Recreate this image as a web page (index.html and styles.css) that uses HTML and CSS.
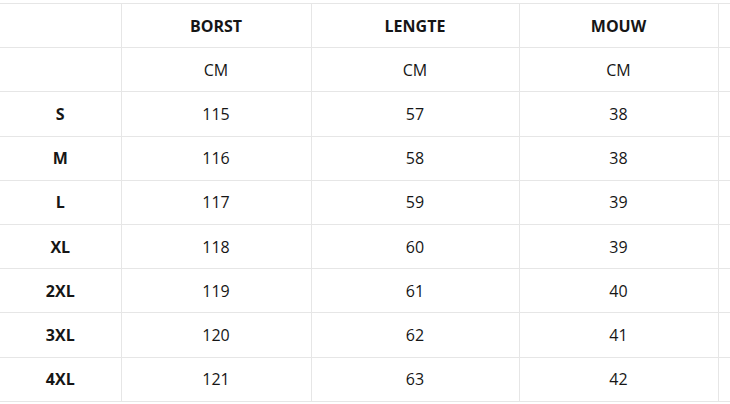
FILE: index.html
```html
<!DOCTYPE html>
<html>
<head>
<meta charset="utf-8">
<link rel="stylesheet" href="styles.css">
</head>
<body>
<table class="size-table">
  <colgroup>
    <col class="c-size">
    <col class="c-borst">
    <col class="c-lengte">
    <col class="c-mouw">
    <col class="c-extra">
  </colgroup>
  <tr class="head">
    <td></td><td>BORST</td><td>LENGTE</td><td>MOUW</td><td></td>
  </tr>
  <tr><td></td><td>CM</td><td>CM</td><td>CM</td><td></td></tr>
  <tr><td class="size">S</td><td>115</td><td>57</td><td>38</td><td></td></tr>
  <tr><td class="size">M</td><td>116</td><td>58</td><td>38</td><td></td></tr>
  <tr><td class="size">L</td><td>117</td><td>59</td><td>39</td><td></td></tr>
  <tr><td class="size">XL</td><td>118</td><td>60</td><td>39</td><td></td></tr>
  <tr><td class="size">2XL</td><td>119</td><td>61</td><td>40</td><td></td></tr>
  <tr><td class="size">3XL</td><td>120</td><td>62</td><td>41</td><td></td></tr>
  <tr><td class="size">4XL</td><td>121</td><td>63</td><td>42</td><td></td></tr>
</table>
</body>
</html>
```
FILE: styles.css
```css
html, body {
  margin: 0;
  padding: 0;
  background: #fff;
  overflow: hidden;
}
body {
  font-family: "Open Sans", "Noto Sans", sans-serif;
  font-size: 16px;
  color: #161616;
}
.size-table {
  border-collapse: collapse;
  table-layout: fixed;
  width: 730px;
  margin: 3px 0 0 0;
}
.c-size { width: 121px; }
.c-borst { width: 190px; }
.c-lengte { width: 208px; }
.c-mouw { width: 199px; }
.c-extra { width: 12px; }
.size-table td {
  border: 1px solid #e6e6e6;
  height: 43.2px;
  padding: 0;
  text-align: center;
  vertical-align: middle;
}
.size-table td:first-child { border-left: none; }
.size-table td:last-child { border-right: none; }
.head td, .size-table td.size {
  font-weight: 700;
}
```
